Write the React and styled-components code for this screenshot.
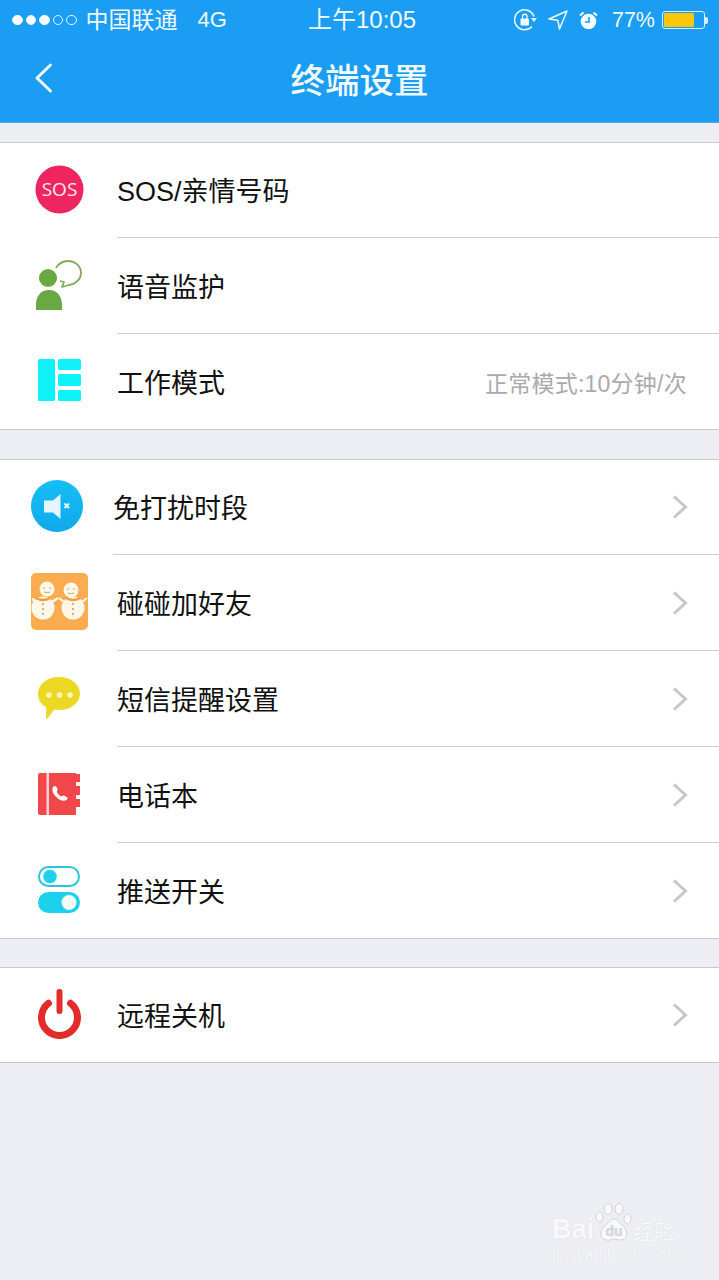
import styled, { createGlobalStyle } from 'styled-components'

const Global = createGlobalStyle`
  html, body {
    margin: 0;
    padding: 0;
    background: #edeef4;
  }
  body {
    font-family: "Liberation Sans", "Noto Sans CJK SC", sans-serif;
  }
`

const Page = styled.div`
  width: 719px;
  height: 1280px;
  position: relative;
  overflow: hidden;
  background: #edeef4;
`
const Header = styled.header`
  height: 122px;
  background: #1a9df2;
  border-bottom: 1px solid #52a9d8;
  color: #f2f9fe;
`
const StatusBar = styled.div`
  height: 40px;
  display: grid;
  grid-template-columns: 296px auto 1fr;
  align-items: center;
  padding: 0 11px 0 12px;
  line-height: 40px;
`
const StatusLeft = styled.div`
  display: flex;
  align-items: center;
`
const StatusRight = styled.div`
  display: flex;
  align-items: center;
  justify-content: flex-end;
`
const Dots = styled.div`
  display: flex;
  gap: 3px;
  margin-right: 9px;
`
const Dot = styled.span`
  width: 10.500px;
  height: 10.500px;
  box-sizing: border-box;
  border-radius: 50%;
  border: 1px solid #e6f4fe;
  background: ${(p) => (p.$on ? '#f8fcff' : 'transparent')};
`
const Carrier = styled.span`
  font-size: 23px;
  margin-right: 20px;
`
const Net = styled.span`
  font-size: 22px;
`
const Clock = styled.span`
  font-size: 24px;
`
const Percent = styled.span`
  font-size: 21.500px;
  margin: 0 7px 0 14px;
`
const Battery = styled.div`
  width: 43px;
  height: 18px;
  box-sizing: border-box;
  border: 1px solid #d8eefc;
  border-radius: 3px;
  padding: 1px;
`
const BatteryFill = styled.div`
  height: 100%;
  background: #fcc60a;
  border-radius: 1px;
`
const BatteryTip = styled.div`
  width: 3px;
  height: 7px;
  background: #d8eefc;
  border-radius: 0 2px 2px 0;
`
const NavBar = styled.div`
  height: 82px;
  display: grid;
  grid-template-columns: 1fr auto 1fr;
  align-items: center;
  padding-bottom: 6px;
  box-sizing: border-box;
`
const BackSlot = styled.div`
  display: flex;
  padding-left: 33px;
`
const Title = styled.h1`
  margin: 0;
  font-family: "Noto Sans CJK SC", sans-serif;
  font-size: 34.500px;
  font-weight: 500;
  line-height: 48px;
`
const Group = styled.section`
  margin-top: ${(p) => p.$gap}px;
  background: #fff;
  border-top: 1px solid #c9c9cc;
  border-bottom: 1px solid #c9c9cc;
`
const Row = styled.div`
  height: ${(p) => p.$height}px;
  display: flex;
  align-items: stretch;
`
const IconSlot = styled.div`
  width: ${(p) => (p.$narrow ? 113 : 117)}px;
  flex: none;
  box-sizing: border-box;
  padding: 0 0 3px 1px;
  display: flex;
  align-items: center;
  justify-content: center;
`
const RowBody = styled.div`
  flex: 1;
  display: flex;
  align-items: center;
  justify-content: space-between;
  padding-right: 31px;
  border-bottom: ${(p) => (p.$last ? 'none' : '1px solid #cfcfd2')};
`
const Label = styled.span`
  padding-top: 4px;
  font-size: 27px;
  color: #111;
  line-height: 36px;
`
const Value = styled.span`
  font-size: 23px;
  letter-spacing: 0.250px;
  color: #aaaaab;
  margin-right: 1px;
`
const Watermark = styled.div`
  position: absolute;
  left: 552px;
  top: 1200px;
  width: 132px;
  color: #f9f9fb;
  text-shadow: 0 0 1px #cfcfd5;
`
const MarkTop = styled.div`
  display: flex;
  align-items: flex-end;
  height: 46px;
  font-size: 27px;
  font-weight: 700;
  line-height: 34px;
`
const MarkCn = styled.span`
  font-family: "Noto Sans CJK SC", sans-serif;
  font-size: 21px;
  font-weight: 400;
  line-height: 32px;
`
const MarkUrl = styled.div`
  font-size: 15px;
  letter-spacing: 0.400px;
  line-height: 18px;
  white-space: nowrap;
`

const BackIcon = () => (
  <svg width="20" height="32" viewBox="0 0 20 32">
    <path d="M17.500 3 4 16 17.500 29" fill="none" stroke="#f2f9fe" strokeWidth="3" strokeLinecap="round" strokeLinejoin="round" />
  </svg>
)

const Chevron = () => (
  <svg width="16" height="26" viewBox="0 0 16 26">
    <path d="M2 2.500 13.500 13 2 23.500" fill="none" stroke="#c6c6c8" strokeWidth="3" />
  </svg>
)

const RotationIcon = () => (
  <svg width="23" height="22" viewBox="0 0 23 22" style={{ marginRight: 11 }}>
    <path d="M18 17.500A10 10 0 1 1 20 7.500" fill="none" stroke="#f2f9fe" strokeWidth="1.500" />
    <path d="M17 9h6l-3 4z" fill="#f2f9fe" />
    <rect x="6.500" y="9.500" width="8.500" height="7" rx="1" fill="#f2f9fe" />
    <path d="M8.500 10V7.500a2.200 2.200 0 0 1 4.500 0V10" fill="none" stroke="#f2f9fe" strokeWidth="1.300" />
  </svg>
)

const LocationIcon = () => (
  <svg width="20" height="20" viewBox="0 0 20 20" style={{ marginRight: 11 }}>
    <path d="M19 1 1 9l8.800 1.200L11.500 19z" fill="none" stroke="#f2f9fe" strokeWidth="1.500" strokeLinejoin="round" />
  </svg>
)

const AlarmIcon = () => (
  <svg width="19" height="19" viewBox="0 0 19 19">
    <circle cx="9.500" cy="10.500" r="7.800" fill="#f6fbff" />
    <path d="M10 6v5H6" fill="none" stroke="#1a9df2" strokeWidth="1.600" />
    <path d="M1 4.500 4.500 1.500M18 4.500l-3.500-3" stroke="#f6fbff" strokeWidth="2" />
  </svg>
)

const SosIcon = () => (
  <svg width="49" height="49" viewBox="0 0 49 49">
    <circle cx="24.500" cy="24.500" r="24" fill="#ef2560" />
    <text x="24.500" y="31" textAnchor="middle" fontSize="19" fill="#fdeaf0" fontFamily="Open Sans, sans-serif">SOS</text>
  </svg>
)

const MonitorIcon = () => (
  <svg width="46" height="50" viewBox="0 0 46 50">
    <circle cx="12" cy="18" r="9" fill="#69a842" />
    <path d="M1 50c-2 0-1-2-1-5 0-9 5-15 13-15s13 6 13 15c0 3 1 5-1 5z" fill="#69a842" />
    <path d="M20 8C23 3 27 1 32 1c7 0 13 5 13 12 0 6-5 11-12 12l-7 2 2-5-4-1" fill="none" stroke="#7eaa5c" strokeWidth="1.800" strokeLinejoin="round" />
  </svg>
)

const ModeIcon = () => (
  <svg width="43" height="42" viewBox="0 0 43 42">
    <rect x="0" y="0" width="17" height="42" rx="1.500" fill="#0ff3f8" />
    <rect x="20" y="0" width="23" height="11" rx="1.500" fill="#0ff3f8" />
    <rect x="20" y="15" width="23" height="12" rx="1.500" fill="#0ff3f8" />
    <rect x="20" y="31" width="23" height="11" rx="1.500" fill="#0ff3f8" />
  </svg>
)

const MuteIcon = () => (
  <svg width="52" height="52" viewBox="0 0 52 52">
    <defs>
      <linearGradient id="muteFill" x1="0" y1="0" x2="0" y2="1">
        <stop offset="0" stopColor="#14bff5" />
        <stop offset="1" stopColor="#10a8ea" />
      </linearGradient>
    </defs>
    <circle cx="26" cy="26" r="26" fill="url(#muteFill)" />
    <path d="M13 20.500h9L29.500 14v25L22 32.500h-9z" fill="#e4f5fb" />
    <path d="m33.500 23.500 4.500 4.500m0-4.500L33.500 28" stroke="#e4f5fb" strokeWidth="2" />
  </svg>
)

const Snowman = ({ headX, headY, bodyX, armA, armB }) => (
  <g>
    <circle cx={bodyX} cy="35" r="11.500" fill="#fff8ea" />
    <circle cx={headX} cy={headY} r="7.500" fill="#fff8ea" />
    <path d={`M${headX - 4} ${headY - 1}h2M${headX + 2} ${headY - 1}h2M${headX - 3} ${headY + 3}q3 1.500 6 0`} stroke="#e9a050" strokeWidth="1" fill="none" />
    <path d={`M${bodyX - 7} 25q7 4 14 0`} stroke="#f29c3f" strokeWidth="2.500" fill="none" />
    <path d={`M${bodyX - 9} 29 ${armA} 25M${bodyX + 9} 29 ${armB} 25`} stroke="#fff8ea" strokeWidth="2.200" />
    <circle cx={bodyX} cy="31" r="1.100" fill="#c9a070" />
    <circle cx={bodyX} cy="36" r="1.100" fill="#c9a070" />
    <circle cx={bodyX} cy="41" r="1.100" fill="#c9a070" />
  </g>
)

const SnowIcon = () => (
  <svg width="57" height="57" viewBox="0 0 57 57">
    <rect width="57" height="57" rx="5" fill="#fbac51" />
    <Snowman headX={16} headY={16} bodyX={12} armA={2} armB={27} />
    <Snowman headX={40} headY={17} bodyX={42} armA={28} armB={56} />
  </svg>
)

const MessageIcon = () => (
  <svg width="42" height="42" viewBox="0 0 42 42">
    <path d="M21 0c12 0 21 7.500 21 16.500S33 33 21 33c-2 0-3.500-.2-5-.5L10 41c-1 1.200-2 .8-2-.5l.3-10C3 27.500 0 22.500 0 16.500 0 7.500 9 0 21 0z" fill="#ecd824" />
    <circle cx="11" cy="18" r="2.800" fill="#fbf6c0" />
    <circle cx="21.500" cy="18" r="2.800" fill="#fbf6c0" />
    <circle cx="32" cy="18" r="2.800" fill="#fbf6c0" />
  </svg>
)

const PhoneBookIcon = () => (
  <svg width="42" height="42" viewBox="0 0 42 42">
    <path d="M2 0h36v1h4v8h-4v4h4v9h-4v4h4v8h-4v7a1 1 0 0 1-1 1H2a2 2 0 0 1-2-2V2a2 2 0 0 1 2-2z" fill="#f2474a" />
    <rect x="8.500" y="0" width="2.500" height="42" fill="#fbd3d3" />
    <path d="M15 14c1.500-1.500 2.500-1.500 3.500 0l1 2c.4 1 0 1.800-.8 2.500 1 2.500 2.500 4 5 5 .8-.8 1.700-1.200 2.600-.8l2 1c1.700 1 1.700 2 0 3.300-2.500 1.800-6 .5-9.500-2.500s-5.300-7-3.800-10.500z" fill="#fff" />
  </svg>
)

const ToggleIcon = () => (
  <svg width="42" height="47" viewBox="0 0 42 47">
    <rect x="1" y="1" width="40" height="19" rx="9.500" fill="#fdfefe" stroke="#2bc4da" strokeWidth="2" />
    <circle cx="12" cy="10.500" r="6.800" fill="#1dd0ec" />
    <rect x="0" y="26" width="42" height="21" rx="10.500" fill="#1dd0ec" />
    <circle cx="31" cy="36.500" r="7.500" fill="#f4fbf4" />
  </svg>
)

const PowerIcon = () => (
  <svg width="43" height="50" viewBox="0 0 43 50">
    <path d="M10.500 14.300A18 18 0 1 0 32.500 14.300" fill="none" stroke="#e22c2a" strokeWidth="7" strokeLinecap="round" />
    <rect x="18.500" y="0" width="6" height="25" rx="3" fill="#e22c2a" />
  </svg>
)

const PawIcon = () => (
  <svg width="38" height="40" viewBox="0 0 38 40" style={{ marginBottom: 4, marginLeft: 1, flex: 'none' }}>
    <g fill="#f9f9fb" stroke="#d2d2d8" strokeWidth="1">
      <ellipse cx="4.500" cy="15" rx="3.500" ry="5" />
      <ellipse cx="13" cy="7" rx="4" ry="5.500" />
      <ellipse cx="24" cy="7" rx="4" ry="5.500" />
      <ellipse cx="32.500" cy="17" rx="3.500" ry="5" />
      <path d="M19 17c4 0 6 5 10 8 5 5 3 13-4 13-3 0-4-1-6-1s-4 2-8 1c-6-1-7-8-2-13 4-3 6-8 10-8z" />
    </g>
    <text x="19" y="34" textAnchor="middle" fontSize="14" fontWeight="700" fill="#d6d6db" fontFamily="Liberation Sans, sans-serif">du</text>
  </svg>
)

const groups = [
  {
    gap: 19,
    rows: [
      { label: 'SOS/亲情号码', icon: <SosIcon /> },
      { label: '语音监护', icon: <MonitorIcon /> },
      { label: '工作模式', icon: <ModeIcon />, value: '正常模式:10分钟/次' },
    ],
  },
  {
    gap: 29,
    rows: [
      { label: '免打扰时段', icon: <MuteIcon />, narrow: true, arrow: true },
      { label: '碰碰加好友', icon: <SnowIcon />, arrow: true },
      { label: '短信提醒设置', icon: <MessageIcon />, arrow: true },
      { label: '电话本', icon: <PhoneBookIcon />, arrow: true },
      { label: '推送开关', icon: <ToggleIcon />, arrow: true },
    ],
  },
  {
    gap: 28,
    rows: [{ label: '远程关机', icon: <PowerIcon />, arrow: true }],
  },
]

// outer rows of a group are a pixel shorter than the ones between them
function rowHeight(i, count) {
  if (count === 1) return 94
  return i === 0 || i === count - 1 ? 95 : 96
}

function App() {
  return (
    <Page>
      <Global />
      <Header>
        <StatusBar>
          <StatusLeft>
            <Dots>
              {[1, 1, 1, 0, 0].map((on, i) => (
                <Dot key={i} $on={on} />
              ))}
            </Dots>
            <Carrier>中国联通</Carrier>
            <Net>4G</Net>
          </StatusLeft>
          <Clock>上午10:05</Clock>
          <StatusRight>
            <RotationIcon />
            <LocationIcon />
            <AlarmIcon />
            <Percent>77%</Percent>
            <Battery>
              <BatteryFill style={{ width: '77%' }} />
            </Battery>
            <BatteryTip />
          </StatusRight>
        </StatusBar>
        <NavBar>
          <BackSlot>
            <BackIcon />
          </BackSlot>
          <Title>终端设置</Title>
        </NavBar>
      </Header>
      {groups.map((group, g) => (
        <Group key={g} $gap={group.gap}>
          {group.rows.map((row, i) => (
            <Row key={row.label} $height={rowHeight(i, group.rows.length)}>
              <IconSlot $narrow={row.narrow}>{row.icon}</IconSlot>
              <RowBody $last={i === group.rows.length - 1}>
                <Label>{row.label}</Label>
                {row.value && <Value>{row.value}</Value>}
                {row.arrow && <Chevron />}
              </RowBody>
            </Row>
          ))}
        </Group>
      ))}
      <Watermark>
        <MarkTop>
          Bai
          <PawIcon />
          <MarkCn>经验</MarkCn>
        </MarkTop>
        <MarkUrl>jingyan.baidu.com</MarkUrl>
      </Watermark>
    </Page>
  )
}

export default App
